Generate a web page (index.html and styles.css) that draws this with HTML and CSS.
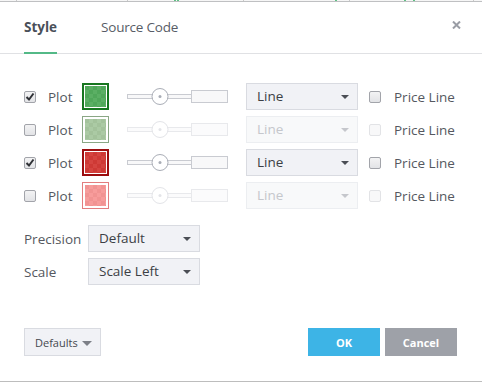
FILE: index.html
```html
<!DOCTYPE html>
<html lang="en">
<head>
    <meta charset="UTF-8">
    <meta name="viewport" content="width=device-width, initial-scale=1.0">
    <title>Style</title>
    <link rel="stylesheet" href="styles.css">
</head>
<body>

  <div class="chart-edge">
    <span class="tick" style="left: 16px"></span>
    <span class="tick" style="left: 127px"></span>
    <span class="tick green" style="left: 174px"></span>
    <span class="tick green" style="left: 177px"></span>
    <span class="tick" style="left: 243px"></span>
    <span class="tick green" style="left: 335px"></span>
    <span class="tick" style="left: 349px"></span>
    <span class="tick green" style="left: 404px"></span>
    <span class="tick green" style="left: 413px"></span>
    <span class="tick" style="left: 473px"></span>
  </div>

  <div class="dialog">
    <div class="dialog-header">
      <div class="tab active">Style</div>
      <div class="tab">Source Code</div>
      <span class="close-btn">
        <svg width="9" height="8" viewBox="0 0 9 8"><path d="M1 0.5 L8 7.5 M8 0.5 L1 7.5" stroke="#9a9da5" stroke-width="2"/></svg>
      </span>
    </div>

    <div class="dialog-body">
      <div class="plots">

        <div class="plot-row">
          <span class="cbox checked"><svg width="10" height="10" viewBox="0 0 10 10"><path d="M1.5 5 L4 7.5 L8.5 1.5" stroke="#2f3136" stroke-width="2" fill="none"/></svg></span>
          <span class="plot-label">Plot</span>
          <span class="swatch green"><span class="swatch-fill"></span></span>
          <svg class="slider" width="102" height="20" viewBox="0 0 102 20">
            <rect x="0.5" y="7.5" width="65" height="4" fill="#f8f8f9" stroke="#c9cbd1"/>
            <rect x="64.5" y="3.5" width="36" height="12" fill="#f8f8f9" stroke="#c9cbd1"/>
            <rect x="65" y="8" width="1" height="3" fill="#f8f8f9"/>
            <circle cx="33" cy="9.5" r="8" fill="#fff" stroke="#a9adb6"/>
            <circle cx="33" cy="9.5" r="1.5" fill="#a9adb6"/>
          </svg>
          <div class="select">Line<span class="caret"></span></div>
          <span class="cbox"></span>
          <span class="price-label">Price Line</span>
        </div>

        <div class="plot-row off">
          <span class="cbox"></span>
          <span class="plot-label">Plot</span>
          <span class="swatch green-faded"><span class="swatch-fill"></span></span>
          <svg class="slider" width="102" height="20" viewBox="0 0 102 20">
            <rect x="0.5" y="7.5" width="65" height="4" fill="#fbfbfc" stroke="#e8e9ec"/>
            <rect x="64.5" y="3.5" width="36" height="12" fill="#fbfbfc" stroke="#e8e9ec"/>
            <rect x="65" y="8" width="1" height="3" fill="#fbfbfc"/>
            <circle cx="33" cy="9.5" r="8" fill="#fff" stroke="#e3e4e8"/>
            <circle cx="33" cy="9.5" r="1.5" fill="#e3e4e8"/>
          </svg>
          <div class="select disabled">Line<span class="caret"></span></div>
          <span class="cbox disabled"></span>
          <span class="price-label">Price Line</span>
        </div>

        <div class="plot-row">
          <span class="cbox checked"><svg width="10" height="10" viewBox="0 0 10 10"><path d="M1.5 5 L4 7.5 L8.5 1.5" stroke="#2f3136" stroke-width="2" fill="none"/></svg></span>
          <span class="plot-label">Plot</span>
          <span class="swatch red"><span class="swatch-fill"></span></span>
          <svg class="slider" width="102" height="20" viewBox="0 0 102 20">
            <rect x="0.5" y="7.5" width="65" height="4" fill="#f8f8f9" stroke="#c9cbd1"/>
            <rect x="64.5" y="3.5" width="36" height="12" fill="#f8f8f9" stroke="#c9cbd1"/>
            <rect x="65" y="8" width="1" height="3" fill="#f8f8f9"/>
            <circle cx="33" cy="9.5" r="8" fill="#fff" stroke="#a9adb6"/>
            <circle cx="33" cy="9.5" r="1.5" fill="#a9adb6"/>
          </svg>
          <div class="select">Line<span class="caret"></span></div>
          <span class="cbox"></span>
          <span class="price-label">Price Line</span>
        </div>

        <div class="plot-row off">
          <span class="cbox"></span>
          <span class="plot-label">Plot</span>
          <span class="swatch red-faded"><span class="swatch-fill"></span></span>
          <svg class="slider" width="102" height="20" viewBox="0 0 102 20">
            <rect x="0.5" y="7.5" width="65" height="4" fill="#fbfbfc" stroke="#e8e9ec"/>
            <rect x="64.5" y="3.5" width="36" height="12" fill="#fbfbfc" stroke="#e8e9ec"/>
            <rect x="65" y="8" width="1" height="3" fill="#fbfbfc"/>
            <circle cx="33" cy="9.5" r="8" fill="#fff" stroke="#e3e4e8"/>
            <circle cx="33" cy="9.5" r="1.5" fill="#e3e4e8"/>
          </svg>
          <div class="select disabled">Line<span class="caret"></span></div>
          <span class="cbox disabled"></span>
          <span class="price-label">Price Line</span>
        </div>

      </div>

      <div class="options">
        <div class="option-row">
          <span class="option-label">Precision</span>
          <div class="select">Default<span class="caret"></span></div>
        </div>
        <div class="option-row">
          <span class="option-label">Scale</span>
          <div class="select">Scale Left<span class="caret"></span></div>
        </div>
      </div>
    </div>

    <div class="dialog-footer">
      <button class="defaults-btn">Defaults<span class="caret"></span></button>
      <div class="footer-actions">
        <button class="ok-btn">OK</button>
        <button class="cancel-btn">Cancel</button>
      </div>
    </div>
  </div>

</body>
</html>
```

FILE: styles.css
```css
body {
  margin: 0;
  font-family: "Open Sans", "Noto Sans", sans-serif;
  font-size: 13.5px;
  color: #555860;
  background: #fff;
}

.chart-edge {
  position: relative;
  height: 1px;
  background: #f6f6f6;
  border-bottom: 1px solid #bfc0c2;
}

.tick {
  position: absolute;
  top: 0;
  width: 1px;
  height: 1px;
  background: #c9c9c9;
}

.tick.green {
  width: 2px;
  background: #5fc184;
}

.dialog {
  background: #fff;
  border-bottom: 1px solid #bdbdbd;
}

.dialog-header {
  display: flex;
  height: 51px;
  padding-left: 24px;
  border-bottom: 1px solid #e0e1e4;
}

.tab {
  box-sizing: border-box;
  height: 52px;
  margin-bottom: -1px;
  padding-top: 15px;
  line-height: 20px;
  color: #575c66;
  margin-right: 45px;
  border-bottom: 2px solid transparent;
}

.tab.active {
  font-weight: 700;
  color: #4a4f59;
  border-bottom-color: #53b987;
  margin-right: 44px;
}

.tab + .tab {
  letter-spacing: -0.2px;
}

.close-btn {
  margin-left: auto;
  margin-right: 21px;
  margin-top: 19px;
  height: 8px;
}

.close-btn svg {
  display: block;
}

.dialog-body {
  padding: 29px 0 0 24px;
}

.plots {
  display: flex;
  flex-direction: column;
  gap: 6px;
}

.plot-row {
  display: flex;
  align-items: center;
  height: 27px;
}

.cbox {
  box-sizing: border-box;
  width: 12px;
  height: 12px;
  border: 1px solid #a2a4aa;
  border-radius: 2px;
  background: linear-gradient(#f3f3f4, #e2e3e6);
  display: flex;
  align-items: center;
  justify-content: center;
}

.cbox svg {
  display: block;
}

.cbox.disabled {
  border-color: #e2e3e6;
  background: #f8f8f9;
}

.plot-label {
  margin-left: 12px;
  width: 34px;
}

.swatch {
  box-sizing: border-box;
  width: 27px;
  height: 27px;
  padding: 1px;
  border: 2px solid;
  background: #fff;
}

.swatch-fill {
  display: block;
  width: 100%;
  height: 100%;
  background-size: 8px 8px;
  background-image: repeating-conic-gradient(rgba(255, 255, 255, 0.05) 0 25%, rgba(0, 0, 0, 0.025) 0 50%);
}

.swatch.green { border-color: #17761f; }
.swatch.green .swatch-fill { background-color: #52ab5c; }

.swatch.green-faded { border-color: #8aa785; border-width: 1px; padding: 2px; }
.swatch.green-faded .swatch-fill { background-color: #a7c79f; }

.swatch.red { border-color: #9b0d0f; }
.swatch.red .swatch-fill { background-color: #d33a36; }

.swatch.red-faded { border-color: #e27d7e; border-width: 1px; padding: 2px; }
.swatch.red-faded .swatch-fill { background-color: #f79796; }

.slider {
  display: block;
  margin-left: 18px;
}

.select {
  box-sizing: border-box;
  position: relative;
  width: 112px;
  height: 27px;
  line-height: 25px;
  padding-left: 10px;
  background: #f1f2f6;
  border: 1px solid #d9dbe1;
  color: #3c3f45;
}

.plot-row .select {
  margin-left: 17px;
}

.select.disabled {
  background: #f8f9fa;
  border-color: #eceef1;
  color: #c5c7cc;
}

.caret {
  position: absolute;
  right: 8px;
  top: 11px;
  width: 0;
  height: 0;
  border-left: 4px solid transparent;
  border-right: 4px solid transparent;
  border-top: 4px solid #4b4e55;
}

.select.disabled .caret {
  border-top-color: #c5c7cc;
}

.plot-row .select + .cbox {
  margin-left: 11px;
}

.price-label {
  margin-left: 13px;
}

.options {
  display: flex;
  flex-direction: column;
  gap: 6px;
  margin-top: 16px;
}

.option-row {
  display: flex;
  align-items: center;
}

.option-label {
  width: 64px;
}

.dialog-footer {
  display: flex;
  align-items: center;
  padding: 43px 25px 25px 24px;
}

.footer-actions {
  margin-left: auto;
  display: flex;
  gap: 5px;
}

button {
  font-family: "Open Sans", "Noto Sans", sans-serif;
  font-size: 11px;
  height: 28px;
  border: 0;
  padding: 0;
  cursor: pointer;
}

.defaults-btn {
  position: relative;
  width: 77px;
  text-align: left;
  padding-left: 10px;
  background: #f1f2f6;
  border: 1px solid #d9dbe1;
  color: #45484e;
}

.defaults-btn .caret {
  right: 8px;
  top: 12px;
  border-left-width: 5px;
  border-right-width: 5px;
  border-top: 5px solid #7d8087;
}

.ok-btn,
.cancel-btn {
  width: 72px;
  color: #fff;
  font-weight: 700;
}

.ok-btn {
  background: #3db4e6;
}

.cancel-btn {
  background: #9ea1a8;
}
```
